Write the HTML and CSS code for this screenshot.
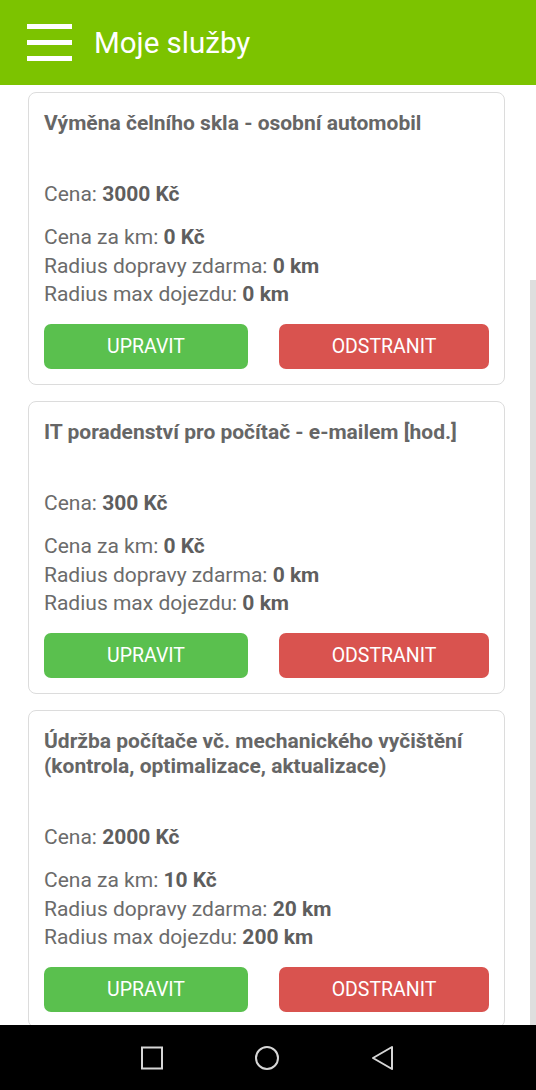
FILE: index.html
```html
<!DOCTYPE html>
<html lang="cs">
<head>
    <meta charset="UTF-8">
    <meta name="viewport" content="width=device-width, initial-scale=1.0">
    <title>Moje služby</title>
    <link rel="stylesheet" href="styles.css">
</head>
<body>
    <div class="screen">
        <header class="app-bar">
            <div class="hamburger">
                <span></span>
                <span></span>
                <span></span>
            </div>
            <h1>Moje služby</h1>
        </header>

        <main class="content">
            <div class="service-card">
                <h2>Výměna čelního skla - osobní automobil</h2>
                <p class="price">Cena: <strong>3000 Kč</strong></p>
                <ul class="details">
                    <li>Cena za km: <strong>0 Kč</strong></li>
                    <li>Radius dopravy zdarma: <strong>0 km</strong></li>
                    <li>Radius max dojezdu: <strong>0 km</strong></li>
                </ul>
                <div class="actions">
                    <button class="btn btn-edit">UPRAVIT</button>
                    <button class="btn btn-delete">ODSTRANIT</button>
                </div>
            </div>

            <div class="service-card">
                <h2>IT poradenství pro počítač - e-mailem [hod.]</h2>
                <p class="price">Cena: <strong>300 Kč</strong></p>
                <ul class="details">
                    <li>Cena za km: <strong>0 Kč</strong></li>
                    <li>Radius dopravy zdarma: <strong>0 km</strong></li>
                    <li>Radius max dojezdu: <strong>0 km</strong></li>
                </ul>
                <div class="actions">
                    <button class="btn btn-edit">UPRAVIT</button>
                    <button class="btn btn-delete">ODSTRANIT</button>
                </div>
            </div>

            <div class="service-card">
                <h2>Údržba počítače vč. mechanického vyčištění (kontrola, optimalizace, aktualizace)</h2>
                <p class="price">Cena: <strong>2000 Kč</strong></p>
                <ul class="details">
                    <li>Cena za km: <strong>10 Kč</strong></li>
                    <li>Radius dopravy zdarma: <strong>20 km</strong></li>
                    <li>Radius max dojezdu: <strong>200 km</strong></li>
                </ul>
                <div class="actions">
                    <button class="btn btn-edit">UPRAVIT</button>
                    <button class="btn btn-delete">ODSTRANIT</button>
                </div>
            </div>

            <div class="scroll-thumb"></div>
        </main>

        <nav class="system-bar">
            <svg width="24" height="24" viewBox="0 0 24 24">
                <rect x="2" y="1.5" width="20" height="21" fill="none" stroke="#d6d6d6" stroke-width="2"/>
            </svg>
            <svg width="24" height="24" viewBox="0 0 24 24">
                <circle cx="12" cy="12" r="11" fill="none" stroke="#d6d6d6" stroke-width="2"/>
            </svg>
            <svg width="24" height="26" viewBox="0 0 24 26">
                <path d="M22 2 L3 13 L22 24 Z" fill="none" stroke="#d6d6d6" stroke-width="2" stroke-linejoin="round"/>
            </svg>
        </nav>
    </div>
</body>
</html>
```

FILE: styles.css
```css
body {
    margin: 0;
    font-family: Roboto, "Liberation Sans", sans-serif;
    background: #fff;
}
.screen {
    width: 536px;
    height: 1090px;
    display: flex;
    flex-direction: column;
    overflow: hidden;
}
.app-bar {
    height: 85px;
    flex: none;
    background: #7cc300;
    display: flex;
    align-items: center;
    padding-left: 27px;
    box-sizing: border-box;
}
.hamburger {
    width: 45px;
    display: flex;
    flex-direction: column;
    gap: 11px;
    margin-right: 22px;
    margin-top: -1px;
}
.hamburger span {
    display: block;
    height: 5px;
    background: #fff;
}
.app-bar h1 {
    margin: 0;
    color: #fff;
    font-size: 29.5px;
    font-weight: 400;
}
.content {
    flex: 1;
    position: relative;
    overflow: hidden;
    padding: 7px 31px 0 28px;
}
.service-card {
    border: 1px solid #dcdcdc;
    border-radius: 8px;
    padding: 18px 15px 15px;
    margin-bottom: 16.5px;
    color: #6b6b6b;
}
.service-card h2 {
    margin: 0 0 44px;
    font-size: 21px;
    line-height: 25px;
    font-weight: 700;
    color: #666;
}
.price {
    margin: 0 0 15px;
    font-size: 21px;
    line-height: 28px;
}
.details {
    list-style: none;
    margin: 0 0 15px;
    padding: 0;
    font-size: 21px;
    line-height: 28.5px;
}
strong {
    color: #5e5e5e;
}
.actions {
    display: grid;
    grid-template-columns: 204px 1fr;
    gap: 31px;
}
.btn {
    height: 45px;
    border: none;
    border-radius: 7px;
    color: #fff;
    font-family: inherit;
    font-size: 19.5px;
    cursor: pointer;
}
.btn-edit {
    background: #5ac04e;
}
.btn-delete {
    background: #d9534f;
}
.scroll-thumb {
    position: absolute;
    right: 0;
    top: 195px;
    bottom: 0;
    width: 6px;
    background: #dedede;
}
.system-bar {
    height: 65px;
    flex: none;
    background: #000;
    display: flex;
    align-items: center;
    justify-content: center;
    gap: 91px;
    padding-right: 2px;
}
```
